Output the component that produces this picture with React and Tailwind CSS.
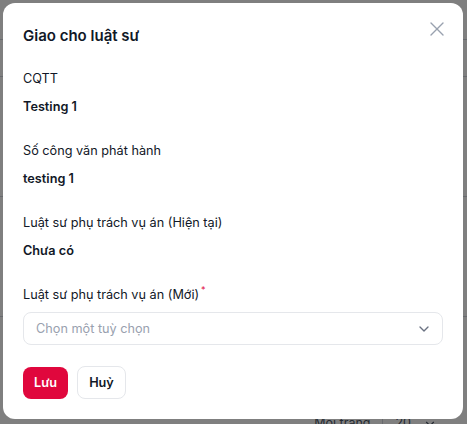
import { X, ChevronDown } from "lucide-react";

const fields = [
  { label: "CQTT", value: "Testing 1" },
  { label: "Số công văn phát hành", value: "testing 1" },
  { label: "Luật sư phụ trách vụ án (Hiện tại)", value: "Chưa có" },
];

export default function App() {
  return (
    <div
      className="relative h-[424px] w-full overflow-hidden bg-white text-[#111827]"
      style={{ fontFamily: "Inter, 'Noto Sans', sans-serif" }}
    >
      {/* page behind the overlay */}
      <div className="h-full w-full">
        <div className="h-[40px] border-b border-gray-300" />
        <div className="h-[37px] border-b border-gray-300" />
        <div className="h-[120px] border-b border-gray-300" />
        <div className="h-[120px] border-b border-gray-300" />
        <div className="flex h-[107px] items-end justify-end pr-[30px]">
          <div className="-mb-[9px] flex items-center text-[12.5px] text-gray-600">
            <span className="pr-[12px]">Mỗi trang</span>
            <span className="flex items-center gap-[12px] border-l border-gray-300 pl-[12px]">
              20 <ChevronDown size={14} />
            </span>
          </div>
        </div>
      </div>

      {/* overlay + modal */}
      <div className="absolute inset-0 bg-black/50">
        <div className="absolute left-[3px] top-[3px] w-[460px] rounded-xl bg-white px-5 pt-[21px] pb-5">
          <button className="absolute right-[14px] top-[14px] text-gray-400">
            <X size={24} strokeWidth={1.4} />
          </button>
          <h2 className="text-[15px] font-semibold leading-6">Giao cho luật sư</h2>

          <div className="mt-[21px] flex flex-col gap-6">
            {fields.map((f) => (
              <div key={f.label} className="flex flex-col gap-2 text-[12.7px] leading-5">
                <p>{f.label}</p>
                <p className="font-semibold">{f.value}</p>
              </div>
            ))}
          </div>

          <div className="mt-6 text-[12.7px] leading-5">
            Luật sư phụ trách vụ án (Mới)
            <span className="relative -top-[6px] ml-[2px] text-[9px] text-[#e0073d]">*</span>
          </div>
          <div className="mt-[6px] flex h-[33px] items-center justify-between rounded-lg border border-gray-200 pl-3 pr-[10px] text-[12.7px] text-gray-400">
            <span>Chọn một tuỳ chọn</span>
            <ChevronDown size={16} className="text-gray-500" />
          </div>

          <div className="mt-[21px] flex items-center gap-[9px]">
            <button className="h-[32px] rounded-lg bg-[#e0073d] px-[11px] text-[12.7px] font-semibold text-white">
              Lưu
            </button>
            <button className="h-[33px] rounded-lg border border-gray-200 bg-white px-[11px] text-[12.7px] font-semibold">
              Huỷ
            </button>
          </div>
        </div>
      </div>
    </div>
  );
}
